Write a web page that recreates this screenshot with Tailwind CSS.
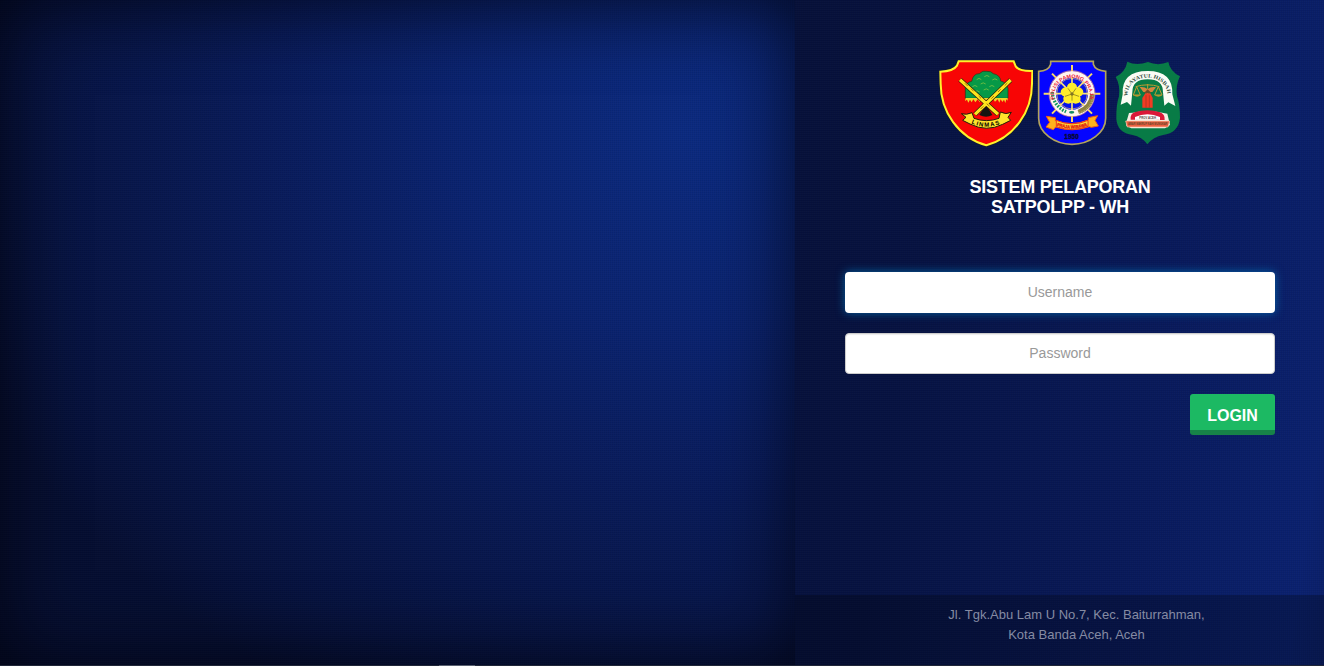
<!DOCTYPE html>
<html lang="id">
<head>
<meta charset="utf-8">
<title>Sistem Pelaporan SATPOLPP - WH</title>
<script src="https://cdn.jsdelivr.net/npm/@tailwindcss/browser@4"></script>
</head>
<body class="h-screen overflow-hidden bg-[#06103a] font-['Liberation_Sans',Arial,sans-serif]">
<div class="relative flex h-full">
  <section class="w-[795px] shrink-0 bg-[repeating-linear-gradient(0deg,rgba(255,255,255,0.015)_0_1px,transparent_1px_2px),repeating-linear-gradient(90deg,rgba(0,0,0,0.06)_0_1px,transparent_1px_2px),radial-gradient(ellipse_760px_640px_at_86%_20%,#0b2a80_0%,#0a2370_30%,#081a58_58%,#06123f_88%,#050e32_100%)] shadow-[inset_0_0_80px_rgba(0,0,8,0.75)]"></section>
  <main class="flex flex-1 flex-col bg-[repeating-linear-gradient(0deg,rgba(255,255,255,0.015)_0_1px,transparent_1px_2px),repeating-linear-gradient(90deg,rgba(0,0,0,0.06)_0_1px,transparent_1px_2px),linear-gradient(98deg,#061039_0%,#061242_25%,#08195a_65%,#0a2170_94%,#0a1f68_100%)]">
    <div class="flex flex-1 flex-col px-[50px] pt-[60px]">
      <div class="flex items-start pl-[94px]">
        <svg class="h-[87px] w-[94px] shrink-0" viewBox="27 30 282 261">
          <path d="M86 34H251L257 49Q267 64 307 63L306 101C306 185 252 263 169 286C86 263 32 185 32 101L31 65Q70 64 81 47Z" fill="#f80505" stroke="#171d25" stroke-width="10"/>
          <path d="M86 34H251L257 49Q267 64 307 63L306 101C306 185 252 263 169 286C86 263 32 185 32 101L31 65Q70 64 81 47Z" fill="#f80505" stroke="#fff22b" stroke-width="6"/>
          <path d="M106 145V112Q110 96 125 94Q130 70 148 71Q158 60 170 64Q184 63 190 71Q211 75 212 93Q229 97 234 115V145Z" fill="#069947" stroke="#253919" stroke-width="2"/>
          <path d="M107 144h126v8l-4-4-3 11-4-10-5 7-5-8-4 10-5-10-8 7-5-7-9 8-8-8-10 7-8-7-6 8-6-8-7 9-6-9-5 9-5-8-5 9-4-9-6 4Z" fill="#efd529"/>
          <path d="M140 89q7-8 14 0m9-9q8-7 15 0m9 10q8-7 15 0m-75 20q8-7 15 0m10-8q8-7 15 0m11 8q8-7 15 0m9 9q8-7 15 0m-83 7q8-7 15 0m12-6q8-7 15 0" fill="none" stroke="#7cc142" stroke-width="2.5"/>
          <path d="M168 163L148 195Q169 205 187 195Z" fill="#171511"/>
          <path d="M90 89L204 193M242 90L135 193" stroke="#29200b" stroke-width="14"/>
          <path d="M90 89L204 193M242 90L135 193" stroke="#ffe51d" stroke-width="10"/>
          <path d="M105 100l8 8m10 8l8 8m15 14l7 7m17 16l9 8m53-70l-8 8m-12 11l-8 8m-12 12l-8 8m-24 23l-8 8" stroke="#a57611" stroke-width="3"/>
          <path d="M94 191Q109 196 126 188L132 205Q169 219 207 205L211 186Q228 195 244 187L234 202L242 211L218 223Q169 247 120 222L98 211L108 202Z" fill="#ffe32b" stroke="#24200a" stroke-width="3"/>
          <path id="linmas-arc" d="M124 220Q169 241 217 219" fill="none"/>
          <text class="fill-black text-[18px] font-bold"><textPath href="#linmas-arc" textLength="88">LINMAS</textPath></text>
        </svg>
        <svg class="ml-1 h-[86px] w-[71px] shrink-0" viewBox="21 30 213 258">
          <path d="M62 34H190V43Q196 62 227 64V205C227 248 179 283 126 283C73 283 26 248 26 205V64Q56 63 62 43Z" fill="#0505ff" stroke="#b3a45c" stroke-width="5"/>
          <g stroke="#f7da68" stroke-width="6"><path d="M126 45V216M41 131H211M66 71L186 191M186 71L66 191"/></g>
          <circle cx="126" cy="131" r="58" fill="none" stroke="#fff4ef" stroke-width="20"/>
          <circle cx="126" cy="131" r="46" fill="#0714e9" stroke="#f2cc63" stroke-width="2"/>
          <circle cx="126" cy="131" r="69" fill="none" stroke="#f19b76" stroke-width="2"/>
          <path d="M126 80V181M76 131H176M89 94L163 168M163 94L89 168" stroke="#f7df80" stroke-width="5"/>
          <g fill="#ffed2c"><ellipse cx="126" cy="112" rx="15" ry="14"/><ellipse cx="144" cy="126" rx="16" ry="14"/><ellipse cx="137" cy="146" rx="15" ry="15"/><ellipse cx="115" cy="146" rx="15" ry="15"/><ellipse cx="108" cy="126" rx="16" ry="14"/></g>
          <path d="M126 132L138 115M126 132L147 139M126 132V152M126 132L105 139M126 132L114 115" stroke="#706718" stroke-width="2"/><circle cx="126" cy="132" r="5" fill="#817720"/>
          <path d="M67 126Q69 167 108 185" fill="none" stroke="#0f965f" stroke-width="10" stroke-dasharray="5 4"/>
          <path d="M187 132Q184 172 145 186" fill="none" stroke="#8d8043" stroke-width="13"/>
          <path d="M189 133Q187 176 145 190" fill="none" stroke="#cfc67e" stroke-width="3" stroke-dasharray="3 3"/>
          <ellipse cx="125" cy="187" rx="8" ry="4" fill="#168b62"/>
          <path id="polisi-arc" d="M73 148A54 54 0 1 1 179 148" fill="none"/>
          <text class="fill-[#e82039] text-[15px] font-bold"><textPath href="#polisi-arc" textLength="190" lengthAdjust="spacingAndGlyphs">POLISI PAMONG PRAJA</textPath></text>
          <path d="M49 199L76 203V212Q126 230 175 210V203L203 197L195 211L205 228L184 232L178 230Q126 248 77 231L70 239L48 231L59 217Z" fill="#ffb21c" stroke="#f25a13" stroke-width="3"/>
          <path d="M79 211Q126 232 174 211V229Q126 247 79 230Z" fill="#ffd534" stroke="#ee3519" stroke-width="3"/>
          <path id="praja-arc" d="M80 227Q126 244 175 226" fill="none"/>
          <text class="fill-[#e3230d] stroke-[#e3230d] text-[13px] font-bold"><textPath href="#praja-arc" textLength="94" lengthAdjust="spacingAndGlyphs">PRAJA WIBAWA</textPath></text>
          <text x="103" y="267" textLength="43" class="fill-[#080832] stroke-[#080832] text-[19px] font-bold">1950</text>
        </svg>
        <svg class="ml-[7px] h-[85px] w-[66px] shrink-0" viewBox="30 33 198 255">
          <path d="M67 38Q94 51 129 39Q159 52 190 39Q195 67 225 82Q211 110 216 142Q225 167 225 207Q220 252 174 258Q145 263 127 286Q111 263 83 258Q37 252 34 210Q33 168 42 142Q46 107 32 84Q61 69 67 38Z" fill="#087b46"/>
          <path d="M53 136Q49 66 128 66Q205 66 202 136L211 171L190 160L178 170L174 130Q174 91 128 91Q82 91 82 130L78 170L66 159L47 167Z" fill="#fafcf5"/>
          <path id="wh-arc" d="M68 142C64 67 191 67 187 142" fill="none"/>
          <text class="fill-[#304b3b] font-['Liberation_Serif',serif] text-[16px] font-bold"><textPath href="#wh-arc" textLength="178" lengthAdjust="spacingAndGlyphs">WILAYATUL HISBAH</textPath></text>
          <path d="M92 113Q128 102 163 113M95 113L85 138H106ZM160 113L149 138H171ZM128 105V137" fill="none" stroke="#bc9c31" stroke-width="3"/>
          <path d="M84 138H107Q97 148 84 138M149 138H172Q160 149 149 138" fill="#b4952e"/>
          <path d="M104 114Q119 112 128 121Q138 112 153 115L142 129H115Z" fill="#d3863f"/>
          <path d="M128 121L117 132H139Z" fill="#6f4b27"/>
          <path d="M121 133H136L143 147V176H112V147Z" fill="#f33b23"/><path d="M123 139V176M133 139V176" stroke="#983522" stroke-width="2"/>
          <path d="M65 216L72 192L84 191Q126 181 172 191L187 194L195 228L180 238H79L64 230Z" fill="#f6eee5"/>
          <path d="M77 212Q75 193 91 189Q127 179 163 189Q181 195 179 213H165Q126 200 91 212Z" fill="#db1838"/>
          <path d="M90 204Q127 188 165 204V213Q128 204 90 213Z" fill="#fff"/>
          <text x="103" y="209" textLength="50" lengthAdjust="spacingAndGlyphs" class="fill-[#513c37] text-[10px] font-bold">PROV ACEH</text>
          <path d="M62 216H194L189 234H67Z" fill="#ed6041" stroke="#f7cdb1" stroke-width="2"/>
          <text x="69" y="229" textLength="118" lengthAdjust="spacingAndGlyphs" class="fill-[#62452a] text-[8px] font-bold">AMAR MAKRUF NAHI MUNGKAR</text>
        </svg>
      </div>
      <h1 class="mt-[30px] text-center text-[18px] leading-5 font-bold tracking-[-0.25px] text-white">SISTEM PELAPORAN<br>SATPOLPP - WH</h1>
      <form class="mt-[55px] flex w-[430px] flex-col gap-5">
        <input aria-label="Username" placeholder="Username" class="h-[41px] rounded-[4px] bg-white px-3 pb-0.5 text-center text-[14px] shadow-[0_0_10px_rgba(0,120,190,0.75)] placeholder:text-[#999]">
        <input type="password" aria-label="Password" placeholder="Password" class="h-[41px] rounded-[4px] border border-[#ccc] bg-white px-3 pb-0.5 text-center text-[14px] shadow-[inset_0_1px_1px_rgba(0,0,0,0.08)] placeholder:text-[#999]">
        <button type="button" class="h-[41px] w-[85px] self-end rounded-[3px] border-b-[5px] border-[#178348] bg-[#1cb963] pt-[7px] text-[16px] leading-6 font-bold text-white">LOGIN</button>
      </form>
    </div>
    <footer class="h-[71px] bg-black/25 pt-[10px] pl-[33px] text-center text-[13px] leading-5 text-[#858ba3]">Jl. Tgk.Abu Lam U No.7, Kec. Baiturrahman,<br>Kota Banda Aceh, Aceh</footer>
  </main>
  <div class="absolute inset-x-0 bottom-0 h-px bg-[#202638]"><div class="ml-[439px] h-px w-9 bg-[#596070]"></div></div>
</div>
</body>
</html>
